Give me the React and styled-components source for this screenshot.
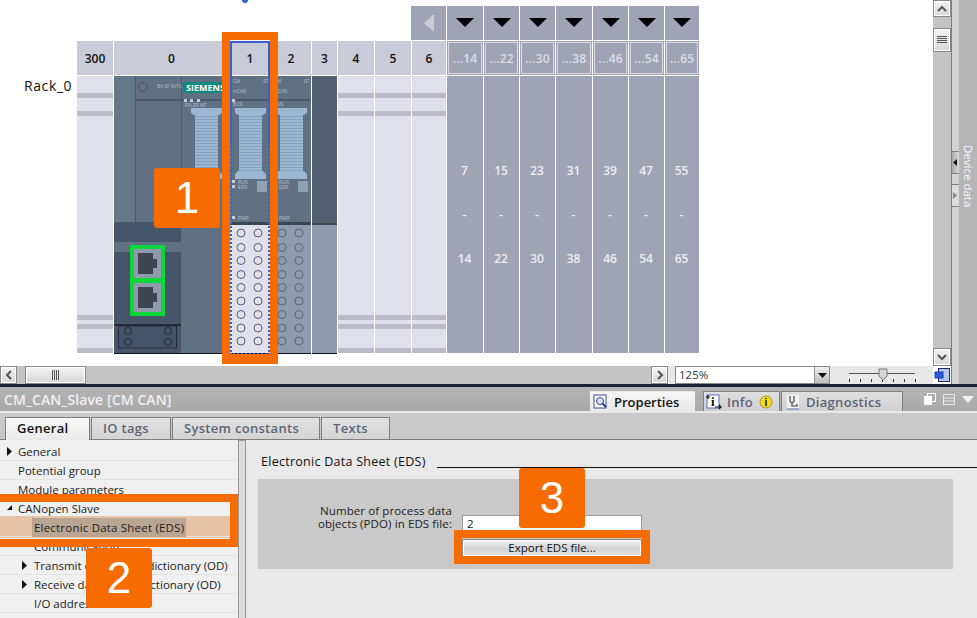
import React from 'react';
import styled, { createGlobalStyle } from 'styled-components';

const Global = createGlobalStyle`
  html, body { margin: 0; padding: 0; background: #fff; }
  * { box-sizing: border-box; }
`;

const FONT = '"Open Sans", "Liberation Sans", sans-serif';

const Page = styled.div`
  position: relative;
  width: 977px;
  height: 618px;
  overflow: hidden;
  display: flex;
  flex-direction: column;
  font-family: ${FONT};
  font-size: 11.5px;
  color: #1c1c1c;
  background: #e9e9e9;
`;

const TopArea = styled.div`
  display: flex;
  height: 385px;
  background: #fff;
`;
const Editor = styled.div`
  width: 933px;
  display: flex;
  flex-direction: column;
`;
const Canvas = styled.div`
  flex: 1;
  display: flex;
  align-items: flex-start;
  padding: 6px 0 0 24px;
`;
const RackLabel = styled.div`
  width: 53px;
  margin-top: 71px;
  font-size: 14px;
  letter-spacing: 0.6px;
  line-height: 18px;
  color: #111;
`;
const RackGrid = styled.div`
  display: grid;
  grid-template-columns: 36px 115px 40px 40px 25px 36px 36px 34px 36px 35px 35px 36px 35px 35px 34px;
  grid-template-rows: 34px 34px 278px;
  gap: 1px;
`;
const FoldBack = styled.div`
  grid-column: 8;
  margin-left: -1px;
  background: #a0a3b6;
  display: flex;
  align-items: center;
  justify-content: center;
`;
const DropCell = styled.div`
  background: #a0a3b6;
  display: flex;
  align-items: center;
  justify-content: center;
`;
const Spacer = styled.div`
  grid-column: 1 / 8;
`;
const HeadCell = styled.div`
  background: #c9cbd9;
  display: flex;
  align-items: center;
  justify-content: center;
  font-size: 12px;
  font-weight: 600;
  color: #111;
`;
const FoldCell = styled.div`
  background: #a0a3b6;
  padding: 1px;
  display: flex;
`;
const FoldInner = styled.div`
  flex: 1;
  border: 1px solid #d9d9df;
  display: flex;
  align-items: center;
  justify-content: center;
  font-size: 12px;
  font-weight: 600;
  letter-spacing: 0.2px;
  color: #dcdde5;
`;
const EmptySlot = styled.div`
  height: 277px;
  background:
    linear-gradient(#babac9, #babac9) 0 17px / 100% 5px no-repeat,
    linear-gradient(#babac9, #babac9) 0 35px / 100% 5px no-repeat,
    linear-gradient(#babac9, #babac9) 0 239px / 100% 5px no-repeat,
    linear-gradient(#babac9, #babac9) 0 248px / 100% 5px no-repeat,
    linear-gradient(#babac9, #babac9) 0 272px / 100% 5px no-repeat,
    #e0e0ea;
`;
const ModuleSlot = styled.div`
  height: 278px;
  border-bottom: 1px solid #10141c;
  svg { display: block; }
`;
const BlankModule = styled(ModuleSlot)`
  background: linear-gradient(#526172 0 147px, #3f4a57 147px 149px, #8e9aad 149px);
`;
const FoldBody = styled.div`
  background: #a0a3b6;
  height: 277px;
  padding: 73px 1px 0 0;
  text-align: center;
  font-size: 12px;
  font-weight: 600;
  line-height: 44px;
  color: #eceef2;
`;

const HScroll = styled.div`
  height: 18px;
  display: flex;
  align-items: stretch;
  background: #c3c3c3;
`;
const ScrollBtn = styled.div`
  width: ${p => p.$w || 17}px;
  height: ${p => p.$h || 18}px;
  flex: none;
  border: 1px solid #8a8a8a;
  background: linear-gradient(#f4f4f4, #d6d6d6);
  box-shadow: inset 0 0 0 1px #fff;
  display: flex;
  align-items: center;
  justify-content: center;
`;
const HThumb = styled(ScrollBtn)`
  width: 61px;
  margin: 0 0 0 8px;
`;
const Fill = styled.div`
  flex: 1;
`;
const ZoomZone = styled.div`
  width: 265px;
  display: flex;
  background: #e8e8e8;
`;
const ZoomCombo = styled.div`
  margin-left: 7px;
  width: 155px;
  display: flex;
  border: 1px solid #8a8a8a;
  background: #fff;
  font-size: 11.5px;
  line-height: 16px;
  padding-left: 3px;
  color: #333;
`;
const ZoomValue = styled.div`
  flex: 1;
`;
const ZoomArrow = styled.div`
  width: 15px;
  border-left: 1px solid #8a8a8a;
  background: linear-gradient(#f0f0f0, #bdbdbd);
  display: flex;
  align-items: center;
  justify-content: center;
`;
const SliderWrap = styled.div`
  margin-left: 19px;
  svg { display: block; }
`;

const RightCol = styled.div`
  width: 18px;
  display: flex;
  flex-direction: column;
  background: #c3c3c3;
`;
const VTrack = styled.div`
  flex: 1;
  display: flex;
  flex-direction: column;
`;
const VThumb = styled(ScrollBtn)`
  margin-top: 11px;
`;
const CornerIcon = styled.div`
  height: 18px;
  background: #fff;
  display: flex;
  align-items: center;
  justify-content: center;
`;
const SideStrip = styled.div`
  width: 8px;
  border-left: 1px solid #7f7f7f;
  background: #d2d2d2;
  padding-top: 151px;
  display: flex;
  flex-direction: column;
  gap: 10px;
`;
const SideHandle = styled.div`
  height: 23px;
  border-top: 1px solid #7f7f7f;
  border-bottom: 1px solid #7f7f7f;
  background: ${p => p.$on ? 'linear-gradient(90deg,#a8a8a8,#d8d8d8)' : '#dcdcdc'};
  display: flex;
  align-items: center;
  padding-left: 1px;
`;
const DevicePanel = styled.div`
  width: 18px;
  background: #b5b5b5;
  display: flex;
  justify-content: center;
  padding-top: 145px;
`;
const DeviceText = styled.div`
  writing-mode: vertical-rl;
  font-size: 11.5px;
  line-height: 18px;
  height: 62px;
  white-space: nowrap;
  color: #f6fafd;
`;

const Divider = styled.div`
  height: 3px;
  background: #1c2236;
`;

const TitleBar = styled.div`
  height: 24px;
  display: flex;
  align-items: flex-end;
  padding-left: 4px;
  background: linear-gradient(#b4b4b4, #a8a8a8);
`;
const Title = styled.div`
  align-self: center;
  width: 586px;
  padding-top: 1px;
  font-size: 14px;
  letter-spacing: 0.1px;
  font-weight: 600;
  color: #f0f0f0;
`;
const InspectorTab = styled.div`
  width: ${p => p.$w}px;
  height: 20px;
  margin-right: ${p => p.$mr || 0}px;
  display: flex;
  align-items: center;
  gap: ${p => p.$gap || 6}px;
  padding-left: ${p => p.$pl || 1}px;
  font-size: 13px;
  font-weight: 600;
  letter-spacing: ${p => p.$on ? 0 : 0.3}px;
  color: ${p => p.$on ? '#111' : '#5e6577'};
  border: 1px solid ${p => p.$on ? 'transparent' : '#7f7f7f'};
  border-bottom: 0;
  background: ${p => p.$on ? 'linear-gradient(#f6f6f6, #e8e8e8)' : 'linear-gradient(#e0e0e0, #cfcfcf)'};
`;
const WarnWrap = styled.span`
  display: flex;
  margin-left: 1px;
`;
const WindowIcons = styled.div`
  display: flex;
  align-items: center;
  gap: 7px;
  margin-left: 21px;
  align-self: center;
`;

const SubTabs = styled.div`
  height: 27px;
  margin-top: 2px;
  padding: 4px 0 0 5px;
  display: flex;
  gap: 1px;
  background: #c9c9c9;
  border-bottom: 1px solid #7f7f7f;
`;
const SubTab = styled.div`
  width: ${p => p.$w}px;
  height: ${p => p.$on ? 23 : 22}px;
  display: flex;
  align-items: center;
  padding: 0 0 2px 11px;
  border: 1px solid #7f7f7f;
  border-bottom: 0;
  font-size: 13px;
  letter-spacing: 0.3px;
  font-weight: 600;
  color: ${p => p.$on ? '#111' : '#5e6577'};
  background: ${p => p.$on ? 'linear-gradient(#f8f8f8, #eaeaea)' : 'linear-gradient(#e2e2e2, #d4d4d4)'};
`;

const Lower = styled.div`
  flex: 1;
  display: flex;
`;
const Tree = styled.div`
  width: 238px;
  padding-top: 2px;
  background: #f0f0f0;
`;
const TreeRow = styled.div`
  height: 19px;
  display: flex;
  align-items: center;
  border-bottom: 1px solid #e3e3e3;
  padding-left: ${p => p.$level ? 34 : 18}px;
  position: relative;
  background: ${p => p.$sel ? '#e8c2a4' : 'transparent'};
  box-shadow: ${p => p.$sel ? '0 -2px 0 #e8c2a4, 0 1px 0 #e8c2a4' : 'none'};
`;
const TreeText = styled.span`
  background: ${p => p.$sel ? '#baa593' : 'transparent'};
  padding: ${p => p.$sel ? '2px' : '0'};
  margin-left: ${p => p.$sel ? -2 : 0}px;
  white-space: nowrap;
  letter-spacing: ${p => p.$sel ? 0.2 : 0}px;
`;
const Expander = styled.svg`
  position: absolute;
  left: ${p => p.$level ? 22 : 7}px;
  top: 5px;
`;
const Splitter = styled.div`
  width: 8px;
  border: 1px solid #9a9a9a;
  border-bottom: 0;
  background: #dcdcdc;
  height: 178px;
`;
const Detail = styled.div`
  flex: 1;
  padding: 13px 24px 0 12px;
`;
const SectionHead = styled.div`
  display: flex;
  align-items: flex-end;
  gap: 11px;
  font-size: 12.5px;
  letter-spacing: 0.27px;
  line-height: 17px;
  color: #111;
  padding-left: 3px;
  margin-right: -24px;
`;
const HeadRule = styled.div`
  flex: 1;
  height: 1px;
  background: #111;
  margin-bottom: 2px;
`;
const Section = styled.div`
  margin-top: 9px;
  height: 90px;
  background: #c9c9c9;
  display: grid;
  grid-template-columns: 194px 180px;
  grid-template-rows: 17px 18px;
  column-gap: 10px;
  row-gap: 7px;
  align-content: start;
  padding-top: 36px;
`;
const FieldLabel = styled.div`
  text-align: right;
  font-size: 11.5px;
  line-height: 13px;
  margin-top: -11px;
  color: #222;
  letter-spacing: 0.1px;
`;
const FieldInput = styled.div`
  background: #fff;
  border: 1px solid #9a9a9a;
  padding-left: 4px;
  font-size: 11.5px;
  line-height: 15px;
`;
const ExportBtn = styled.div`
  grid-column: 2;
  border: 1px solid #8a8a8a;
  background: linear-gradient(#f2f2f2, #d2d2d2 55%, #e4e4e4);
  box-shadow: inset 0 0 0 1px #fff;
  text-align: center;
  font-size: 11.5px;
  line-height: 16px;
  color: #111;
`;

const OrangeFrame = styled.div`
  position: absolute;
  left: ${p => p.$x}px;
  top: ${p => p.$y}px;
  width: ${p => p.$w}px;
  height: ${p => p.$h}px;
  border-style: solid;
  border-color: #f76c00;
  border-width: 8px 8px ${p => p.$bottom || 8}px 8px;
`;
const BlueSelect = styled.div`
  position: absolute;
  left: 230px;
  top: ${p => p.$y}px;
  width: 40px;
  height: ${p => p.$h}px;
  border: 2px ${p => p.$dash ? 'dotted' : 'solid'} #3560d0;
  border-top-width: ${p => p.$dash ? 0 : 2}px;
  border-bottom-width: ${p => p.$dash ? 2 : 0}px;
`;
const Callout = styled.div`
  position: absolute;
  left: ${p => p.$x}px;
  top: ${p => p.$y}px;
  width: 66px;
  height: 60px;
  border-radius: 3px;
  background: #f76c00;
  color: #fff;
  font-family: "Liberation Sans", sans-serif;
  font-size: 44px;
  line-height: 60px;
  text-align: center;
`;
const TopMark = styled.div`
  position: absolute;
  left: 242px;
  top: 0;
  width: 6px;
  height: 3px;
  background: #3560d0;
  border-radius: 0 0 3px 3px;
`;

const Chevron = ({ dir }) => {
  const r = { left: 180, right: 0, up: -90, down: 90 }[dir];
  return (
    <svg width="10" height="10" viewBox="0 0 10 10" style={{ transform: `rotate(${r}deg)` }}>
      <path d="M3 1 L7 5 L3 9" fill="none" stroke="#555" strokeWidth="2" />
    </svg>
  );
};

const Grip = ({ vertical }) => (
  <svg width="10" height="10" viewBox="0 0 10 10" style={{ transform: vertical ? 'rotate(90deg)' : 'none' }}>
    <path d="M1.5 0V10M3.5 0V10M5.5 0V10M7.5 0V10" stroke="#555" strokeWidth="1" />
  </svg>
);

const Triangle = () => (
  <svg width="18" height="10" viewBox="0 0 18 10"><path d="M0 0H18L9 9Z" fill="#000" /></svg>
);

const STRIPES = Array.from({ length: 19 }, (_, i) => 40 + i * 3);

const Pillar = ({ x }) => (
  <g>
    <path
      d={`M${x} 32 H${x + 31} V37 L${x + 28} 39 H${x + 27} V95 H${x + 28} L${x + 31} 98 V103 H${x} V98 L${x + 3} 95 H${x + 4} V39 H${x + 3} L${x} 37 Z`}
      fill="#9cb7d2"
    />
    {STRIPES.map(y => (
      <rect key={y} x={x + 4} y={y} width="23" height="1" fill="#85a2c0" />
    ))}
  </g>
);

const TINY = { fontFamily: '"Liberation Sans", sans-serif', fontSize: 4.5, fill: '#b4bfca' };

const Module0 = () => (
  <svg width="115" height="277" viewBox="0 0 115 277">
    <rect width="115" height="277" fill="#5f7183" />
    <rect x="0" y="0" width="21" height="146" fill="#64788a" />
    <rect x="21" y="0" width="1" height="146" fill="#4b5b6c" />
    <rect x="67" y="0" width="1" height="146" fill="#4b5b6c" />
    <rect x="22" y="23" width="93" height="2" fill="#4b5b6c" />
    <circle cx="29" cy="11" r="4.5" fill="none" stroke="#46535f" />
    <text x="43" y="12" style={TINY}>BA SF RxTx</text>
    <rect x="69" y="6" width="46" height="11" fill="#0f8a80" />
    <text x="72" y="15" fontFamily="Open Sans, sans-serif" fontWeight="700" fontSize="9" fill="#fff">SIEMENS</text>
    <rect x="70" y="23" width="3" height="3" fill="#c3ccd6" />
    <rect x="76" y="23" width="3" height="3" fill="#c3ccd6" />
    <rect x="83" y="23" width="3" height="3" fill="#c3ccd6" />
    <text x="71" y="31" style={TINY}>RN ER MT</text>
    <Pillar x={77} />
    <rect x="0" y="146" width="67" height="131" fill="#46566a" />
    <rect x="0" y="166" width="67" height="10" fill="#5f7183" />
    <rect x="0" y="248" width="67" height="2" fill="#232b38" />
    <rect x="4.5" y="250" width="58" height="22" fill="none" stroke="#232b38" />
    {[14, 54].map(cx => [255, 266].map(cy => (
      <circle key={`${cx}-${cy}`} cx={cx} cy={cy} r="3.5" fill="none" stroke="#232b38" />
    )))}
    {[171, 205].map(y => (
      <g key={y}>
        <rect x="18" y={y} width="31" height="33" fill="#8f9aad" stroke="#0bd63a" strokeWidth="4" />
        <path d={`M24 ${y + 6} H39 V${y + 12} H43 V${y + 21} H39 V${y + 27} H24 Z`} fill="#3f4352" />
      </g>
    ))}
  </svg>
);

const PORT_ROWS = [157, 171.5, 184.5, 198.5, 211.5, 225, 238.5, 252, 265];

const SignalModule = ({ lit }) => (
  <svg width="40" height="277" viewBox="0 0 40 277">
    <rect width="40" height="147" fill="#5f7183" />
    <rect y="146" width="40" height="3" fill="#3b4653" />
    <rect y="149" width="40" height="128" fill={lit ? '#e0e0ea' : '#8e9aad'} />
    <text x="3" y="7" style={TINY}>CM</text>
    <text x="33" y="7" style={TINY}>ST</text>
    <text x="3" y="17" style={TINY}>mCAN</text>
    <rect y="23" width="40" height="2" fill="#4b5b6c" />
    <rect x="2" y="23" width="3" height="3" fill="#c3ccd6" />
    <text x="3" y="30" style={TINY}>BUS</text>
    <Pillar x={5} />
    <rect x="2" y="104" width="3" height="3" fill="#c3ccd6" />
    <rect x="2" y="109" width="3" height="3" fill="#c3ccd6" />
    <text x="8" y="108" style={TINY}>RUN</text>
    <text x="8" y="113" style={TINY}>ERR</text>
    <rect x="27" y="105" width="10" height="11" fill="#8fa2b5" />
    <rect x="2" y="140" width="3" height="3" fill="#c3ccd6" />
    <text x="8" y="144" style={TINY}>PWR</text>
    {PORT_ROWS.map(cy => [11, 28].map(cx => (
      <circle key={`${cx}-${cy}`} cx={cx} cy={cy} r="4" fill="none" stroke={lit ? '#565e74' : '#5c6578'} />
    )))}
  </svg>
);

const FOLDS = [['...14', 7, 14], ['...22', 15, 22], ['...30', 23, 30], ['...38', 31, 38], ['...46', 39, 46], ['...54', 47, 54], ['...65', 55, 65]];

const TREE = [
  { text: 'General', arrow: 'right' },
  { text: 'Potential group' },
  { text: 'Module parameters' },
  { text: 'CANopen Slave', arrow: 'open' },
  { text: 'Electronic Data Sheet (EDS)', level: 1, sel: true },
  { text: 'Communication', level: 1 },
  { text: 'Transmit data object dictionary (OD)', level: 1, arrow: 'right' },
  { text: 'Receive data object dictionary (OD)', level: 1, arrow: 'right' },
  { text: 'I/O addresses', level: 1 },
];

const PropertiesIcon = () => (
  <svg width="17" height="16" viewBox="0 0 17 16">
    <rect x="2" y="1" width="12" height="13" fill="#fff" stroke="#3f4a8a" />
    <circle cx="8" cy="7" r="3.5" fill="#d8e4f6" stroke="#28408f" />
    <path d="M10.5 9.5L14 13" stroke="#28408f" strokeWidth="2" />
  </svg>
);
const InfoIcon = () => (
  <svg width="17" height="17" viewBox="0 0 17 17">
    <rect x="2" y="2" width="12" height="13" fill="#fff" stroke="#5b6fc0" />
    <text x="6" y="13" fontFamily="Liberation Serif, serif" fontWeight="700" fontSize="13" fill="#111">i</text>
    <path d="M1 4H5M3 2V6" stroke="#111" strokeWidth="1.2" />
    <path d="M10 14H16M14 12L16 14L14 16" stroke="#111" strokeWidth="1.2" fill="none" />
  </svg>
);
const WarnDot = () => (
  <svg width="14" height="14" viewBox="0 0 14 14">
    <circle cx="7" cy="7" r="6" fill="#f7d71e" stroke="#a8962a" />
    <text x="7" y="11" textAnchor="middle" fontFamily="Liberation Sans, sans-serif" fontWeight="700" fontSize="10" fill="#111">i</text>
  </svg>
);
const DiagIcon = () => (
  <svg width="14" height="16" viewBox="0 0 14 16">
    <rect x="1" y="1" width="12" height="14" fill="#f2f2f2" />
    <path d="M1 15H13" stroke="#5b6fc0" />
    <path d="M4 2V7C4 9 8 9 8 7V2M6 9V12H11V10" fill="none" stroke="#444" strokeWidth="1.2" />
  </svg>
);

const ZoomSlider = () => (
  <svg width="68" height="18" viewBox="0 0 68 18">
    <path d="M0 7.5H66" stroke="#555" />
    {[0, 11, 22, 33, 44, 55, 66].map(x => <path key={x} d={`M${x + 0.5} 13V16`} stroke="#333" />)}
    <path d="M30 3H38V10L34 14L30 10Z" fill="#d8d8d8" stroke="#777" />
  </svg>
);

const App = () => (
  <Page>
    <Global />
    <TopArea>
      <Editor>
        <Canvas>
          <RackLabel>Rack_0</RackLabel>
          <RackGrid>
            <Spacer />
            <FoldBack>
              <svg width="10" height="18" viewBox="0 0 10 18"><path d="M10 0V18L0 9Z" fill="#c9cbd9" /></svg>
            </FoldBack>
            {FOLDS.map(f => <DropCell key={f[0]}><Triangle /></DropCell>)}

            {['300', '0', '1', '2', '3', '4', '5', '6'].map(n => <HeadCell key={n}>{n}</HeadCell>)}
            {FOLDS.map(f => <FoldCell key={f[0]}><FoldInner>{f[0]}</FoldInner></FoldCell>)}

            <EmptySlot />
            <ModuleSlot><Module0 /></ModuleSlot>
            <ModuleSlot><SignalModule lit /></ModuleSlot>
            <ModuleSlot><SignalModule /></ModuleSlot>
            <BlankModule />
            <EmptySlot />
            <EmptySlot />
            <EmptySlot />
            {FOLDS.map(f => (
              <FoldBody key={f[0]}>{f[1]}<br />-<br />{f[2]}</FoldBody>
            ))}
          </RackGrid>
        </Canvas>
        <HScroll>
          <ScrollBtn><Chevron dir="left" /></ScrollBtn>
          <HThumb><Grip /></HThumb>
          <Fill />
          <ScrollBtn><Chevron dir="right" /></ScrollBtn>
          <ZoomZone>
            <ZoomCombo>
              <ZoomValue>125%</ZoomValue>
              <ZoomArrow>
                <svg width="9" height="5" viewBox="0 0 9 5"><path d="M0 0H9L4.5 5Z" fill="#111" /></svg>
              </ZoomArrow>
            </ZoomCombo>
            <SliderWrap><ZoomSlider /></SliderWrap>
          </ZoomZone>
        </HScroll>
      </Editor>
      <RightCol>
        <VTrack>
          <ScrollBtn $w={18} $h={17}><Chevron dir="up" /></ScrollBtn>
          <VThumb $w={18} $h={24}><Grip vertical /></VThumb>
          <Fill />
          <ScrollBtn $w={18} $h={18}><Chevron dir="down" /></ScrollBtn>
        </VTrack>
        <CornerIcon>
          <svg width="16" height="14" viewBox="0 0 16 14">
            <rect x="4.5" y="0.5" width="11" height="13" fill="#b7c7e6" stroke="#1c2a6e" />
            <rect x="1" y="4" width="8" height="6" fill="#2c5be0" stroke="#1c3fb0" />
          </svg>
        </CornerIcon>
      </RightCol>
      <SideStrip>
        <SideHandle $on>
          <svg width="4" height="7" viewBox="0 0 4 7"><path d="M4 0V7L0 3.5Z" fill="#111" /></svg>
        </SideHandle>
        <SideHandle>
          <svg width="4" height="7" viewBox="0 0 4 7"><path d="M0 0V7L4 3.5Z" fill="#888" /></svg>
        </SideHandle>
      </SideStrip>
      <DevicePanel><DeviceText>Device data</DeviceText></DevicePanel>
    </TopArea>
    <Divider />
    <TitleBar>
      <Title>CM_CAN_Slave [CM CAN]</Title>
      <InspectorTab $on $w={105} $mr={8} $gap={5}><PropertiesIcon />Properties</InspectorTab>
      <InspectorTab $w={77} $mr={1} $gap={5}><InfoIcon />Info<WarnWrap><WarnDot /></WarnWrap></InspectorTab>
      <InspectorTab $w={122} $pl={4}><DiagIcon />Diagnostics</InspectorTab>
      <WindowIcons>
        <svg width="12" height="12" viewBox="0 0 12 12">
          <rect x="3.5" y="0.5" width="8" height="8" fill="none" stroke="#fff" />
          <rect x="0" y="3" width="8" height="9" fill="#fff" />
        </svg>
        <svg width="12" height="11" viewBox="0 0 12 11">
          <rect x="0.5" y="0.5" width="11" height="10" fill="none" stroke="#e6e6e6" />
          <path d="M0 4H12M0 7H12" stroke="#e6e6e6" />
        </svg>
        <svg width="12" height="7" viewBox="0 0 12 7"><path d="M0 0H12L6 7Z" fill="#f2f2f2" /></svg>
      </WindowIcons>
    </TitleBar>
    <SubTabs>
      <SubTab $on $w={85}>General</SubTab>
      <SubTab $w={80}>IO tags</SubTab>
      <SubTab $w={148}>System constants</SubTab>
      <SubTab $w={69}>Texts</SubTab>
    </SubTabs>
    <Lower>
      <Tree>
        {TREE.map(row => (
          <TreeRow key={row.text} $level={row.level} $sel={row.sel}>
            {row.arrow === 'right' && (
              <Expander $level={row.level} width="6" height="9" viewBox="0 0 6 9"><path d="M0 0L5 4.5L0 9Z" fill="#111" /></Expander>
            )}
            {row.arrow === 'open' && (
              <Expander width="6" height="9" viewBox="0 0 6 9"><path d="M5 1V6H0Z" fill="#111" /></Expander>
            )}
            <TreeText $sel={row.sel}>{row.text}</TreeText>
          </TreeRow>
        ))}
      </Tree>
      <Splitter />
      <Detail>
        <SectionHead>
          Electronic Data Sheet (EDS)
          <HeadRule />
        </SectionHead>
        <Section>
          <FieldLabel>Number of process data<br />objects (PDO) in EDS file:</FieldLabel>
          <FieldInput>2</FieldInput>
          <ExportBtn>Export EDS file...</ExportBtn>
        </Section>
      </Detail>
    </Lower>

    <BlueSelect $y={41} $h={102} />
    <BlueSelect $dash $y={143} $h={212} />
    <TopMark />
    <OrangeFrame $x={222} $y={32} $w={56} $h={332} $bottom={10} />
    <OrangeFrame $x={-8} $y={494} $w={246} $h={53} />
    <OrangeFrame $x={454} $y={530} $w={196} $h={34} />
    <Callout $x={154} $y={168}>1</Callout>
    <Callout $x={86} $y={548}>2</Callout>
    <Callout $x={519} $y={468}>3</Callout>
  </Page>
);

export default App;
